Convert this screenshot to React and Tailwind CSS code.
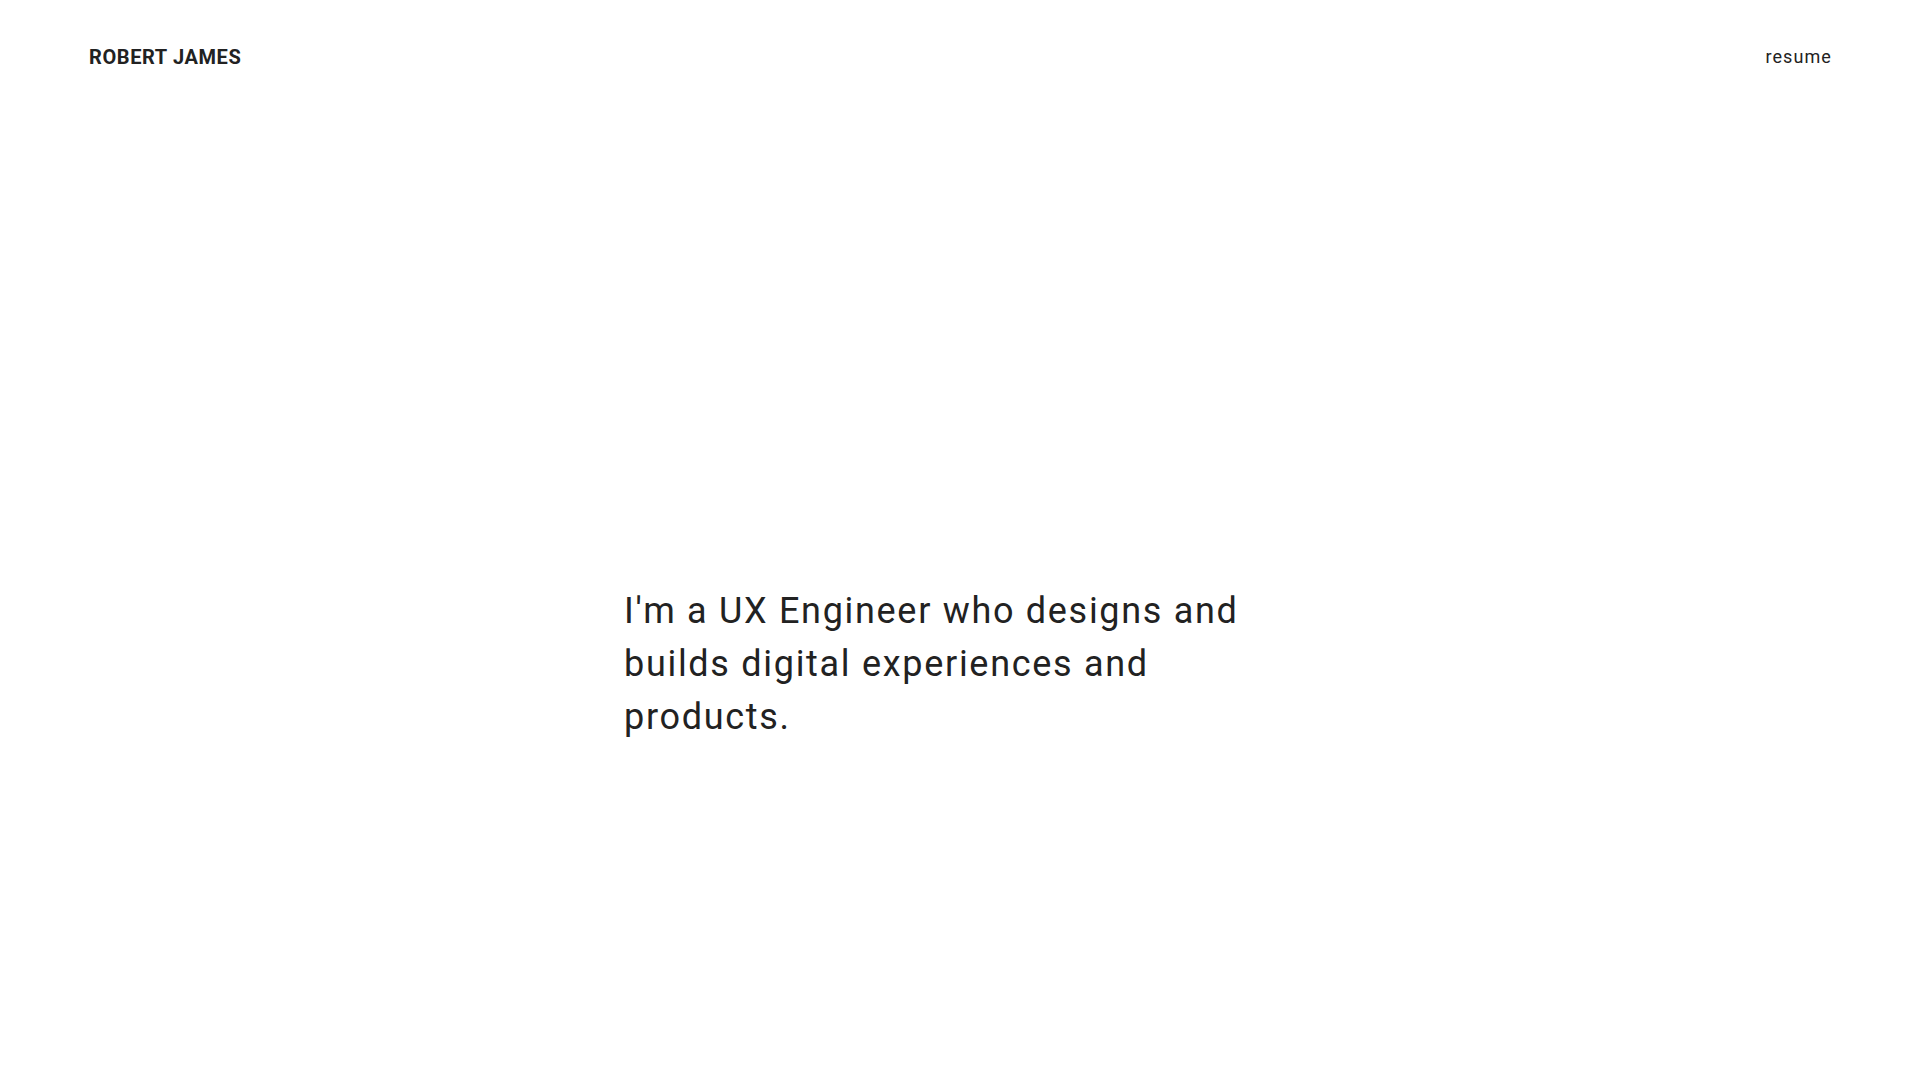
export default function App() {
  return (
    <div className="min-h-screen bg-white text-[#222222]" style={{ fontFamily: "Roboto, 'Noto Sans', sans-serif" }}>
      <header className="flex items-center justify-between pl-[89px] pr-[88px] pt-[45px]">
        <div className="text-[20px] font-bold tracking-[0.6px] leading-[24px]">ROBERT JAMES</div>
        <a className="text-[18px] tracking-[1.1px] leading-[24px]">resume</a>
      </header>
      <main className="flex justify-center pt-[516px]">
        <p className="w-[672px] text-[36px] tracking-[1.7px] leading-[53px]">
          I'm a UX Engineer who designs and builds digital experiences and products.
        </p>
      </main>
    </div>
  );
}
